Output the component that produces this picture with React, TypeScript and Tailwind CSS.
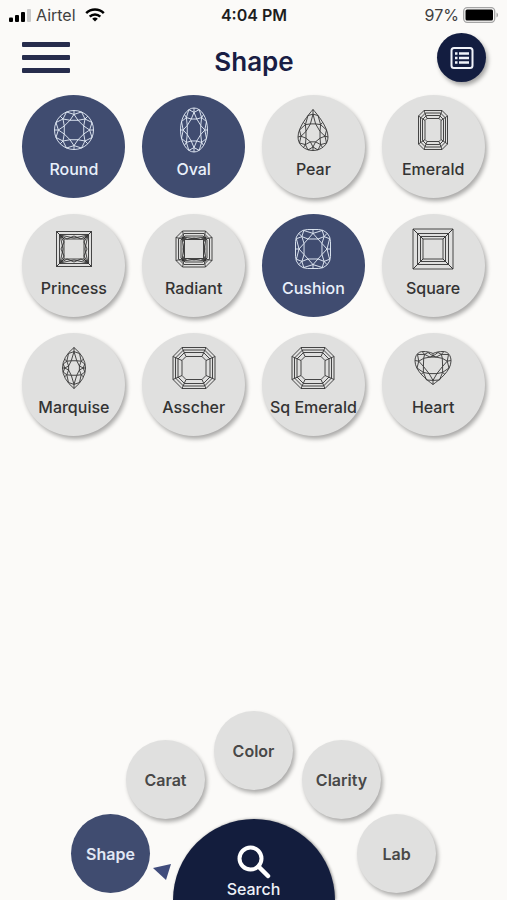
import { useState } from 'react'
import type { ReactNode } from 'react'
import clsx from 'clsx'

type Point = [number, number]

const toPoints = (points: Point[]) => points.map(([x, y]) => `${x.toFixed(2)},${y.toFixed(2)}`).join(' ')

// 16 points around a superellipse, starting at the top
const ring = (rx: number, ry: number, power = 2): Point[] =>
  Array.from({ length: 16 }, (_, i) => {
    const angle = (i * Math.PI) / 8 - Math.PI / 2
    const c = Math.cos(angle)
    const s = Math.sin(angle)
    return [
      rx * Math.sign(c) * Math.abs(c) ** (2 / power),
      ry * Math.sign(s) * Math.abs(s) ** (2 / power),
    ]
  })

const mirror = (half: Point[]): Point[] => [
  ...half,
  ...half.slice(1, -1).reverse().map(([x, y]): Point => [-x, y]),
]

const pearRing = mirror([[0, -20.5], [5, -14.5], [9.5, -7.5], [13.5, 0], [15, 7], [13.5, 13], [9.5, 17.5], [5, 20], [0, 20.5]])
const marquiseRing = mirror([[0, -20.5], [5.5, -14.5], [9, -8.5], [10.8, -4], [11.5, 0], [10.8, 4], [9, 8.5], [5.5, 14.5], [0, 20.5]])
const heartRing = mirror([[0, -14], [5, -15.5], [10.5, -16], [15.5, -13.5], [17.8, -7.5], [16, 0], [12, 6.5], [6.5, 12], [0, 16.5]])

function Gem({ children }: { children: ReactNode }) {
  return (
    <svg
      viewBox="-23 -23 46 46"
      className="size-[46px] shrink-0"
      fill="none"
      stroke="currentColor"
      strokeWidth="0.9"
      strokeLinejoin="round"
      aria-hidden="true"
    >
      {children}
    </svg>
  )
}

// Girdle, star facets and table of a brilliant style cut
function Brilliant({ girdle, outline, tip = 0.8, table = 0.54, cy = 0 }: {
  girdle: Point[]
  outline: ReactNode
  tip?: number
  table?: number
  cy?: number
}) {
  const scale = ([x, y]: Point, k: number): Point => [x * k, cy + (y - cy) * k]
  const at = (i: number) => girdle[(i + 16) % 16]
  const tips = [0, 2, 4, 6, 8, 10, 12, 14]

  return (
    <Gem>
      {outline}
      <polygon points={toPoints(tips.map((i) => scale(at(i + 1), table)))} />
      {tips.map((i) => (
        <g key={i}>
          <polyline points={toPoints([scale(at(i - 1), table), scale(at(i), tip), scale(at(i + 1), table)])} />
          <polyline points={toPoints([at(i - 1), scale(at(i), tip), at(i + 1)])} />
          <polyline points={toPoints([at(i), scale(at(i), tip)])} />
        </g>
      ))}
    </Gem>
  )
}

const octagon = (w: number, h: number, c: number): Point[] => [
  [-w + c, -h], [w - c, -h], [w, -h + c], [w, h - c],
  [w - c, h], [-w + c, h], [-w, h - c], [-w, -h + c],
]

// Concentric steps, given as [half width, half height, corner cut]
function StepCut({ steps, children }: { steps: [number, number, number][]; children?: ReactNode }) {
  const rings = steps.map(([w, h, c]) => octagon(w, h, c))
  const inner = rings[rings.length - 1]
  return (
    <Gem>
      {rings.map((points, i) => (
        <polygon key={i} points={toPoints(points)} />
      ))}
      {rings[0].map((point, i) => (
        <polyline key={i} points={toPoints([point, inner[i]])} />
      ))}
      {children}
    </Gem>
  )
}

function SideFacets({ outer, inner }: { outer: number; inner: number }) {
  return (
    <>
      {[0, 90, 180, 270].map((angle) => (
        <g key={angle} transform={`rotate(${angle})`}>
          <polyline points={toPoints([[-outer, -outer], [-inner + 3, -inner], [0, -outer + 1], [inner - 3, -inner], [outer, -outer]])} />
          <polyline points={toPoints([[-outer, -outer], [0, -inner - 1], [outer, -outer]])} />
          <polyline points={toPoints([[-outer, -outer], [-inner, -inner]])} />
        </g>
      ))}
    </>
  )
}

const shapes: { name: string; icon: ReactNode }[] = [
  {
    name: 'Round',
    icon: <Brilliant girdle={ring(19.5, 19.5)} outline={<circle r="19.5" />} />,
  },
  {
    name: 'Oval',
    icon: <Brilliant girdle={ring(13.5, 22)} outline={<ellipse rx="13.5" ry="22" />} />,
  },
  {
    name: 'Pear',
    icon: (
      <Brilliant
        girdle={pearRing}
        cy={3}
        table={0.52}
        outline={<path d="M0-20.5C4-16 15-3 15 7C15 15 8 20.5 0 20.5S-15 15-15 7C-15-3-4-16 0-20.5Z" />}
      />
    ),
  },
  {
    name: 'Emerald',
    icon: <StepCut steps={[[14.5, 19.5, 5.5], [12.5, 17, 5], [10.5, 14.5, 4], [8, 11.5, 2]]} />,
  },
  {
    name: 'Princess',
    icon: (
      <StepCut steps={[[17.5, 17.5, 0], [14.5, 14.5, 0], [10, 10, 0]]}>
        <SideFacets outer={14} inner={10} />
      </StepCut>
    ),
  },
  {
    name: 'Radiant',
    icon: (
      <StepCut steps={[[18, 18, 6.5], [15.5, 15.5, 5.5], [13, 13, 4], [9.5, 9.5, 0]]}>
        <SideFacets outer={12} inner={9.5} />
      </StepCut>
    ),
  },
  {
    name: 'Cushion',
    icon: (
      <Brilliant
        girdle={ring(17.5, 19.5, 3)}
        outline={<rect x="-17.5" y="-19.5" width="35" height="39" rx="12" />}
      />
    ),
  },
  {
    name: 'Square',
    icon: <StepCut steps={[[20, 20, 0], [15.5, 15.5, 0], [12.5, 12.5, 0], [10, 10, 0]]} />,
  },
  {
    name: 'Marquise',
    icon: (
      <Brilliant
        girdle={marquiseRing}
        table={0.5}
        outline={<path d="M0-20.5Q11.5-11 11.5 0T0 20.5Q-11.5 11-11.5 0T0-20.5Z" />}
      />
    ),
  },
  {
    name: 'Asscher',
    icon: <StepCut steps={[[21, 20.5, 9], [18.5, 18, 8], [16, 15.5, 6.5], [12, 11.5, 4]]} />,
  },
  {
    name: 'Sq Emerald',
    icon: <StepCut steps={[[21, 20.5, 9], [18.5, 18, 8], [16, 15.5, 6.5], [12, 11.5, 4]]} />,
  },
  {
    name: 'Heart',
    icon: (
      <Brilliant
        girdle={heartRing}
        cy={-4}
        tip={0.8}
        table={0.6}
        outline={<path d="M0-14.5C3-16 7-16.5 10-16.5C15-16.5 18-12.5 18-7C18 3 6 12 0 16.5C-6 12-18 3-18-7C-18-12.5-15-16.5-10-16.5C-7-16.5-3-16 0-14.5Z" />}
      />
    ),
  },
]

// Filters fanned out above the search button
const filters = [
  { name: 'Shape', place: 'mt-[103px]' },
  { name: 'Carat', place: 'mt-[29px] -ml-6' },
  { name: 'Color', place: 'ml-[9px]' },
  { name: 'Clarity', place: 'mt-[29px] ml-[9px]' },
  { name: 'Lab', place: 'mt-[103px] -ml-6' },
]

const raised = 'bg-[#e0e0df] shadow-[2px_3px_4px_rgba(0,0,0,0.32)]'

function StatusBar() {
  return (
    <div className="grid h-[30px] grid-cols-3 items-center pl-[9px] pr-2 text-base">
      <div className="flex items-center text-[#3f3f3f]">
        <svg viewBox="0 0 22 13" className="h-[13px] w-[22px]" aria-hidden="true">
          <rect y="8.5" width="4" height="4.5" rx="1" fill="#000" />
          <rect x="6" y="6" width="4" height="7" rx="1" fill="#000" />
          <rect x="12" y="3" width="4" height="10" rx="1" fill="#000" />
          <rect x="18" width="4" height="13" rx="1" fill="#c9c9c9" />
        </svg>
        <span className="ml-[5px]">Airtel</span>
        <svg viewBox="0 0 20 14" className="ml-[9px] h-[14px] w-5" fill="none" stroke="#000" strokeWidth="2.5" aria-hidden="true">
          <path d="M1.2 5.2a12.5 12.5 0 0 1 17.6 0M4.7 8.7a7.5 7.5 0 0 1 10.6 0" />
          <path d="M10 13.5L7.2 10.8a4 4 0 0 1 5.6 0Z" fill="#000" stroke="none" />
        </svg>
      </div>
      <div className="text-center font-semibold text-[#1d1d1d]">4:04 PM</div>
      <div className="flex items-center justify-end gap-1 text-[#3f3f3f]">
        <span>97%</span>
        <svg viewBox="0 0 36 16" className="h-4 w-9" aria-hidden="true">
          <rect x="0.7" y="0.7" width="31" height="14.6" rx="3.5" fill="none" stroke="#a5a5a5" strokeWidth="1.3" />
          <rect x="2.5" y="2.5" width="27.5" height="11" rx="1.5" fill="#000" />
          <path d="M33.5 5.5v5c2-.8 2-4.2 0-5Z" fill="#a5a5a5" />
        </svg>
      </div>
    </div>
  )
}

export default function App() {
  const [selected, setSelected] = useState(['Round', 'Oval', 'Cushion'])

  const toggle = (name: string) => {
    setSelected((current) =>
      current.includes(name) ? current.filter((item) => item !== name) : [...current, name]
    )
  }

  return (
    <div className="flex min-h-screen flex-col bg-[#fbfaf8] font-['Inter',sans-serif]">
      <StatusBar />

      <header className="grid h-[55px] grid-cols-3 items-center pl-[22px] pr-[21px]">
        <button type="button" aria-label="Menu" className="flex w-12 flex-col gap-2">
          <span className="h-[5px] rounded-[1px] bg-[#262c4c]" />
          <span className="h-[5px] rounded-[1px] bg-[#262c4c]" />
          <span className="h-[5px] rounded-[1px] bg-[#262c4c]" />
        </button>
        <h1 className="pt-2 text-center text-[26px] leading-8 font-semibold text-[#191d44]">Shape</h1>
        <button
          type="button"
          aria-label="Show list"
          className="flex size-[49px] items-center justify-center justify-self-end rounded-full bg-[#131d40] text-[#f1f3fa] shadow-[2px_3px_4px_rgba(0,0,0,0.35)]"
        >
          <svg viewBox="0 0 24 24" className="size-6" fill="none" stroke="currentColor" aria-hidden="true">
            <rect x="1.5" y="2" width="21" height="20" rx="2.5" strokeWidth="2" />
            <path d="M5 7.5h2.500M5 12h2.500M5 16.5h2.500M9 7.500h10M9 12h10M9 16.5h10" strokeWidth="2.4" />
          </svg>
        </button>
      </header>

      <main className="grid grid-cols-4 justify-items-center gap-y-4 px-[14px] pt-[10px]">
        {shapes.map(({ name, icon }) => {
          const isSelected = selected.includes(name)
          return (
            <button
              key={name}
              type="button"
              aria-pressed={isSelected}
              onClick={() => toggle(name)}
              className={clsx(
                'flex size-[103px] flex-col items-center gap-1 rounded-full pt-3 text-base font-medium whitespace-nowrap',
                isSelected ? 'bg-[#404c70] text-[#e9f0fb]' : raised,
                !isSelected && 'text-[#333333]'
              )}
            >
              {icon}
              <span>{name}</span>
            </button>
          )
        })}
      </main>

      {/* Filter dial, the search button shares its grid cell */}
      <footer className="mt-auto grid overflow-hidden pt-6">
        <nav aria-label="Filters" className="col-start-1 row-start-1 flex items-start justify-center pb-[7px]">
          {filters.map(({ name, place }) => {
            const isActive = name === 'Shape'
            return (
              <div key={name} className={clsx('relative shrink-0', place)}>
                <button
                  type="button"
                  aria-current={isActive ? 'true' : undefined}
                  className={clsx(
                    'size-[79px] rounded-full text-base font-semibold',
                    isActive ? 'bg-[#404c70] text-[#e1e8f5]' : raised,
                    !isActive && 'text-[#484848]'
                  )}
                >
                  {name}
                </button>
                {isActive && (
                  <svg viewBox="0 0 18 16" className="absolute top-[50px] left-[82px] h-4 w-[18px]" fill="#404c7c" aria-hidden="true">
                    <path d="M0 4L18 0L13 16Z" />
                  </svg>
                )}
              </div>
            )
          })}
        </nav>
        <button
          type="button"
          className="z-10 col-start-1 row-start-1 flex h-[81px] w-[162px] flex-col items-center self-end justify-self-center rounded-t-full bg-[#131d3d] pt-[26px] text-base font-medium text-[#eef1f8] shadow-[1px_0_3px_rgba(0,0,0,0.4)]"
        >
          <svg viewBox="0 0 34 34" className="size-[34px] shrink-0" fill="none" stroke="#fff" strokeWidth="4" strokeLinecap="round" aria-hidden="true">
            <circle cx="13.5" cy="13.5" r="11" />
            <path d="M22 22L31 31" strokeWidth="4.5" />
          </svg>
          <span className="leading-5">Search</span>
        </button>
      </footer>
    </div>
  )
}
